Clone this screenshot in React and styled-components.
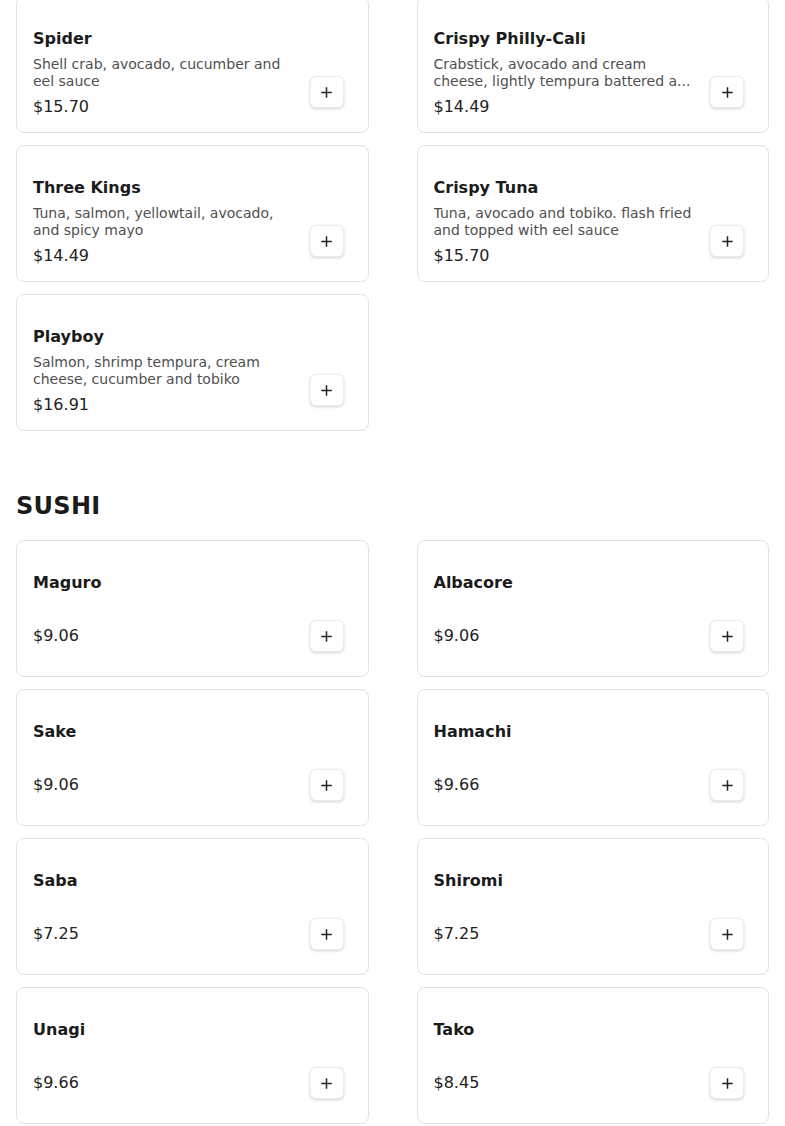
import React from 'react'
import styled, { createGlobalStyle } from 'styled-components'

const rolls = [
  { name: 'Spider', desc: 'Shell crab, avocado, cucumber and eel sauce', price: '$15.70' },
  {
    name: 'Crispy Philly-Cali',
    desc: 'Crabstick, avocado and cream cheese, lightly tempura battered a...',
    price: '$14.49',
  },
  { name: 'Three Kings', desc: 'Tuna, salmon, yellowtail, avocado, and spicy mayo', price: '$14.49' },
  { name: 'Crispy Tuna', desc: 'Tuna, avocado and tobiko. flash fried and topped with eel sauce', price: '$15.70' },
  { name: 'Playboy', desc: 'Salmon, shrimp tempura, cream cheese, cucumber and tobiko', price: '$16.91' },
]

const sushi = [
  { name: 'Maguro', price: '$9.06' },
  { name: 'Albacore', price: '$9.06' },
  { name: 'Sake', price: '$9.06' },
  { name: 'Hamachi', price: '$9.66' },
  { name: 'Saba', price: '$7.25' },
  { name: 'Shiromi', price: '$7.25' },
  { name: 'Unagi', price: '$9.66' },
  { name: 'Tako', price: '$8.45' },
]

const GlobalStyle = createGlobalStyle`
  html, body {
    margin: 0;
    padding: 0;
    background: #ffffff;
    font-family: "DejaVu Sans", Verdana, sans-serif;
    color: #1b1b1b;
  }
`

const PlusIcon = () => (
  <svg width="11" height="11" viewBox="0 0 11 11" fill="none">
    <path d="M5.5 1v9M1 5.5h9" stroke="#222" strokeWidth="1.5" strokeLinecap="square" />
  </svg>
)

const MenuCard = ({ name, desc, price }) => (
  <Card>
    <Info>
      <Title>{name}</Title>
      <Desc $empty={!desc}>{desc}</Desc>
      <Price>{price}</Price>
    </Info>
    <AddButton type="button" aria-label={`Add ${name}`}>
      <PlusIcon />
    </AddButton>
  </Card>
)

export default function App() {
  return (
    <>
      <GlobalStyle />
      <Page>
        <Grid>
          {rolls.map((item) => (
            <MenuCard key={item.name} {...item} />
          ))}
        </Grid>

        <Section>
          <SectionHeading>SUSHI</SectionHeading>
          <Grid>
            {sushi.map((item) => (
              <MenuCard key={item.name} {...item} />
            ))}
          </Grid>
        </Section>
      </Page>
    </>
  )
}

const Page = styled.main`
  margin-top: -4px;
  padding: 0 16px;
`

const Grid = styled.div`
  display: grid;
  grid-template-columns: repeat(2, 1fr);
  column-gap: 48px;
  row-gap: 12px;
`

const Section = styled.section`
  margin-top: 59px;
`

const SectionHeading = styled.h2`
  margin: 0 0 18px;
  font-size: 24px;
  line-height: 32px;
  font-weight: 700;
  letter-spacing: 0.3px;
  color: #1b1b1b;
`

const Card = styled.div`
  display: flex;
  gap: 16px;
  height: 137px;
  box-sizing: border-box;
  padding: 30px 24px 13px 16px;
  border: 1px solid #e3e3e3;
  border-radius: 8px;
  background: #ffffff;
`

const Info = styled.div`
  flex: 1;
  min-width: 0;
  display: flex;
  flex-direction: column;

  & > * {
    flex: none;
  }
`

const Title = styled.div`
  font-size: 16px;
  line-height: 24px;
  font-weight: 700;
  color: #1b1b1b;
`

const Desc = styled.div`
  margin: 5px 0 5px;
  min-height: ${({ $empty }) => ($empty ? '19px' : '0')};
  font-size: 14px;
  line-height: 17px;
  color: #505050;
  display: -webkit-box;
  -webkit-line-clamp: 2;
  -webkit-box-orient: vertical;
  overflow: hidden;
`

const Price = styled.div`
  font-size: 16px;
  line-height: 24px;
  color: #222;
`

const AddButton = styled.button`
  align-self: flex-end;
  flex: none;
  width: 34px;
  height: 32px;
  margin-bottom: 11px;
  display: flex;
  align-items: center;
  justify-content: center;
  padding: 0;
  border: 1px solid #ececec;
  border-radius: 6px;
  background: #ffffff;
  box-shadow: 0 1px 3px rgba(0, 0, 0, 0.18);
  cursor: pointer;
`
